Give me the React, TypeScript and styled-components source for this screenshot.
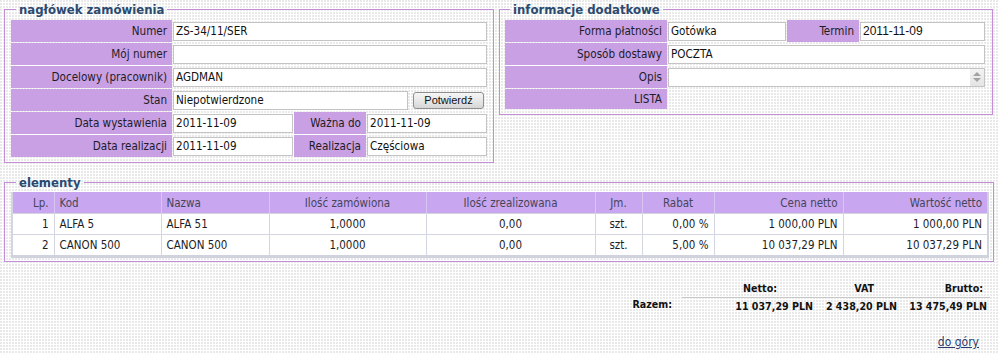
import React from "react";
import styled, { createGlobalStyle } from "styled-components";

const FONT = `"DejaVu Sans Condensed", "DejaVu Sans", sans-serif`;

const Global = createGlobalStyle`
  html, body { margin: 0; padding: 0; }
  body {
    width: 998px;
    height: 354px;
    overflow: hidden;
    background-color: #ffffff;
    background-image: radial-gradient(circle at 1px 1px, #e9e9e9 0.9px, transparent 1.1px);
    background-size: 3px 3px;
    font-family: ${FONT};
    font-size: 11.6px;
    color: #1d1d28;
  }
`;

const Page = styled.div`
  display: flex;
  flex-direction: column;
  padding: 0 5px 0 4px;
`;

const TopRow = styled.div`
  display: flex;
  gap: 5px;
  align-items: flex-start;
`;

const Fieldset = styled.fieldset<{ $w: number; $pl?: number; $pr?: number; $pb?: number }>`
  margin: 0;
  min-width: 0;
  box-sizing: border-box;
  width: ${(p) => p.$w}px;
  border: 1px solid #c28ed6;
  padding: 1px ${(p) => p.$pr ?? 6}px ${(p) => p.$pb ?? 5}px ${(p) => p.$pl ?? 6}px;
`;

const Legend = styled.legend`
  margin-left: 5px;
  padding: 0 3px;
  font-size: 13px;
  line-height: 19px;
  font-weight: bold;
  color: #2b4a70;
`;

const FormGrid = styled.div<{ $cols: string; $rows: string }>`
  display: grid;
  grid-template-columns: ${(p) => p.$cols};
  grid-template-rows: ${(p) => p.$rows};
  column-gap: 1px;
  row-gap: 1px;
`;

const Label = styled.div`
  background: #c9a0e4;
  display: flex;
  align-items: center;
  justify-content: flex-end;
  padding-right: 5px;
  white-space: nowrap;
`;

const Cell = styled.div<{ $span?: number }>`
  grid-column: span ${(p) => p.$span ?? 1};
  display: flex;
  align-items: center;
  gap: 5px;
`;

const Input = styled.input<{ $arial?: boolean }>`
  flex: 1;
  min-width: 0;
  height: 19px;
  box-sizing: border-box;
  margin: 0;
  border: 1px solid #c4c4c4;
  border-radius: 0;
  background: #ffffff;
  padding: 0 2px;
  font-family: ${(p) => (p.$arial ? `"Liberation Sans", Arial, sans-serif` : FONT)};
  font-size: ${(p) => (p.$arial ? "12px" : "11.6px")};
  color: #111111;
  outline: none;
`;

const Button = styled.button`
  width: 71px;
  height: 17px;
  margin: 0 3px 0 0;
  padding: 0;
  box-sizing: border-box;
  border: 1px solid #8f8f8f;
  border-radius: 3px;
  background: linear-gradient(#f6f6f6, #e6e6e6 55%, #d6d6d6);
  font-family: "Liberation Sans", Arial, sans-serif;
  font-size: 11px;
  color: #111111;
`;

const TextBox = styled.div`
  position: relative;
  flex: 1;
  height: 19px;
  box-sizing: border-box;
  border: 1px solid #c4c4c4;
  background: #ffffff;
`;

const Spinner = styled.div`
  position: absolute;
  right: 0;
  top: 0;
  bottom: 0;
  width: 14px;
  background: linear-gradient(#f3f3f3, #e4e4e4);
  display: flex;
  flex-direction: column;
  align-items: center;
  justify-content: center;
  gap: 2px;
`;

const Tri = styled.span<{ $down?: boolean }>`
  width: 0;
  height: 0;
  border-left: 4px solid transparent;
  border-right: 4px solid transparent;
  ${(p) => (p.$down ? "border-top: 4px solid #a3a3a3;" : "border-bottom: 4px solid #a3a3a3;")}
`;

const ElementsFieldset = styled(Fieldset)`
  margin-top: 10px;
  padding-top: 0;
`;

const Table = styled.table`
  width: 978px;
  border-collapse: collapse;
  table-layout: fixed;
  border-left: 2px solid #d3d6e0;
  border-right: 2px solid #d0d3dd;
  border-bottom: 3px solid #d0d3dd;
`;

const Th = styled.th<{ $align: string }>`
  height: 21px;
  padding: 0 5px;
  background: #c8a7f0;
  border-left: 1px solid #dac6f4;
  border-bottom: 1px solid #d3d6e0;
  font-weight: normal;
  font-size: 11.5px;
  color: #45455a;
  text-align: ${(p) => p.$align};
  white-space: nowrap;
  &:first-child { border-left: none; }
`;

const Td = styled.td<{ $align: string }>`
  height: 20px;
  padding: 0 5px;
  background: #ffffff;
  border: 1px solid #d3d6e0;
  border-top: none;
  font-size: 11.5px;
  color: #1d1d28;
  text-align: ${(p) => p.$align};
  white-space: nowrap;
  &:first-child { border-left: none; }
  &:last-child { border-right: none; }
`;

const Summary = styled.div`
  align-self: flex-end;
  margin: 19px 3px 0 0;
  display: grid;
  grid-template-columns: 82px 135px 83px 90px;
  grid-template-rows: 17px 16px;
  font-weight: bold;
  font-size: 10.6px;
  color: #111111;
`;

const SumHead = styled.div<{ $pr: number }>`
  line-height: 15px;
  text-align: right;
  padding-right: ${(p) => p.$pr}px;
  border-bottom: 1px solid #c8c8c8;
  white-space: nowrap;
`;

const SumLabel = styled.div`
  line-height: 16px;
  text-align: right;
  padding-right: 10px;
  margin-top: -2px;
`;

const SumValue = styled.div<{ $pr: number }>`
  line-height: 16px;
  text-align: right;
  padding-right: ${(p) => p.$pr}px;
  white-space: nowrap;
`;

const TopLink = styled.a`
  align-self: flex-end;
  margin: 20px 14px 0 0;
  line-height: 16px;
  font-size: 12px;
  color: #2a3a6c;
  text-decoration: underline;
`;

type Col = { title: string; w: number; h: string; d: string };

const cols: Col[] = [
  { title: "Lp.", w: 42, h: "right", d: "right" },
  { title: "Kod", w: 107, h: "left", d: "left" },
  { title: "Nazwa", w: 108, h: "left", d: "left" },
  { title: "Ilość zamówiona", w: 157, h: "center", d: "center" },
  { title: "Ilość zrealizowana", w: 169, h: "center", d: "center" },
  { title: "Jm.", w: 47, h: "center", d: "center" },
  { title: "Rabat", w: 72, h: "center", d: "right" },
  { title: "Cena netto", w: 129, h: "right", d: "right" },
  { title: "Wartość netto", w: 145, h: "right", d: "right" },
];

const rows = [
  ["1", "ALFA 5", "ALFA 51", "1,0000", "0,00", "szt.", "0,00 %", "1 000,00 PLN", "1 000,00 PLN"],
  ["2", "CANON 500", "CANON 500", "1,0000", "0,00", "szt.", "5,00 %", "10 037,29 PLN", "10 037,29 PLN"],
];

export default function App() {
  return (
    <>
      <Global />
      <Page>
        <TopRow>
          <Fieldset $w={490}>
            <Legend>nagłówek zamówienia</Legend>
            <FormGrid $cols="161px 120px 72px 120px" $rows="repeat(6, 22px)">
              <Label>Numer</Label>
              <Cell $span={3}><Input readOnly defaultValue="ZS-34/11/SER" /></Cell>
              <Label>Mój numer</Label>
              <Cell $span={3}><Input readOnly defaultValue="" /></Cell>
              <Label>Docelowy (pracownik)</Label>
              <Cell $span={3}><Input readOnly defaultValue="AGDMAN" /></Cell>
              <Label>Stan</Label>
              <Cell $span={3}>
                <Input readOnly defaultValue="Niepotwierdzone" />
                <Button type="button">Potwierdź</Button>
              </Cell>
              <Label>Data wystawienia</Label>
              <Cell><Input readOnly defaultValue="2011-11-09" /></Cell>
              <Label>Ważna do</Label>
              <Cell><Input readOnly defaultValue="2011-11-09" /></Cell>
              <Label>Data realizacji</Label>
              <Cell><Input readOnly defaultValue="2011-11-09" /></Cell>
              <Label>Realizacja</Label>
              <Cell><Input readOnly defaultValue="Częściowa" /></Cell>
            </FormGrid>
          </Fieldset>
          <Fieldset $w={494} $pl={5} $pr={7} $pb={5}>
            <Legend>informacje dodatkowe</Legend>
            <FormGrid $cols="162px 118px 72px 125px" $rows="repeat(3, 22px) 20px">
              <Label>Forma płatności</Label>
              <Cell><Input readOnly defaultValue="Gotówka" /></Cell>
              <Label>Termin</Label>
              <Cell><Input $arial readOnly defaultValue="2011-11-09" /></Cell>
              <Label>Sposób dostawy</Label>
              <Cell $span={3}><Input readOnly defaultValue="POCZTA" /></Cell>
              <Label>Opis</Label>
              <Cell $span={3}>
                <TextBox>
                  <Spinner>
                    <Tri />
                    <Tri $down />
                  </Spinner>
                </TextBox>
              </Cell>
              <Label>LISTA</Label>
            </FormGrid>
          </Fieldset>
        </TopRow>

        <ElementsFieldset $w={990} $pl={6} $pr={4} $pb={3}>
          <Legend>elementy</Legend>
          <Table>
            <colgroup>
              {cols.map((c) => (
                <col key={c.title} style={{ width: c.w }} />
              ))}
            </colgroup>
            <thead>
              <tr>
                {cols.map((c) => (
                  <Th key={c.title} $align={c.h}>{c.title}</Th>
                ))}
              </tr>
            </thead>
            <tbody>
              {rows.map((r) => (
                <tr key={r[0]}>
                  {r.map((v, i) => (
                    <Td key={i} $align={cols[i].d}>{v}</Td>
                  ))}
                </tr>
              ))}
            </tbody>
          </Table>
        </ElementsFieldset>

        <Summary>
          <div />
          <SumHead $pr={40}>Netto:</SumHead>
          <SumHead $pr={26}>VAT</SumHead>
          <SumHead $pr={7}>Brutto:</SumHead>
          <SumLabel>Razem:</SumLabel>
          <SumValue $pr={4}>11 037,29 PLN</SumValue>
          <SumValue $pr={3}>2 438,20 PLN</SumValue>
          <SumValue $pr={3}>13 475,49 PLN</SumValue>
        </Summary>

        <TopLink href="#top">do góry</TopLink>
      </Page>
    </>
  );
}
